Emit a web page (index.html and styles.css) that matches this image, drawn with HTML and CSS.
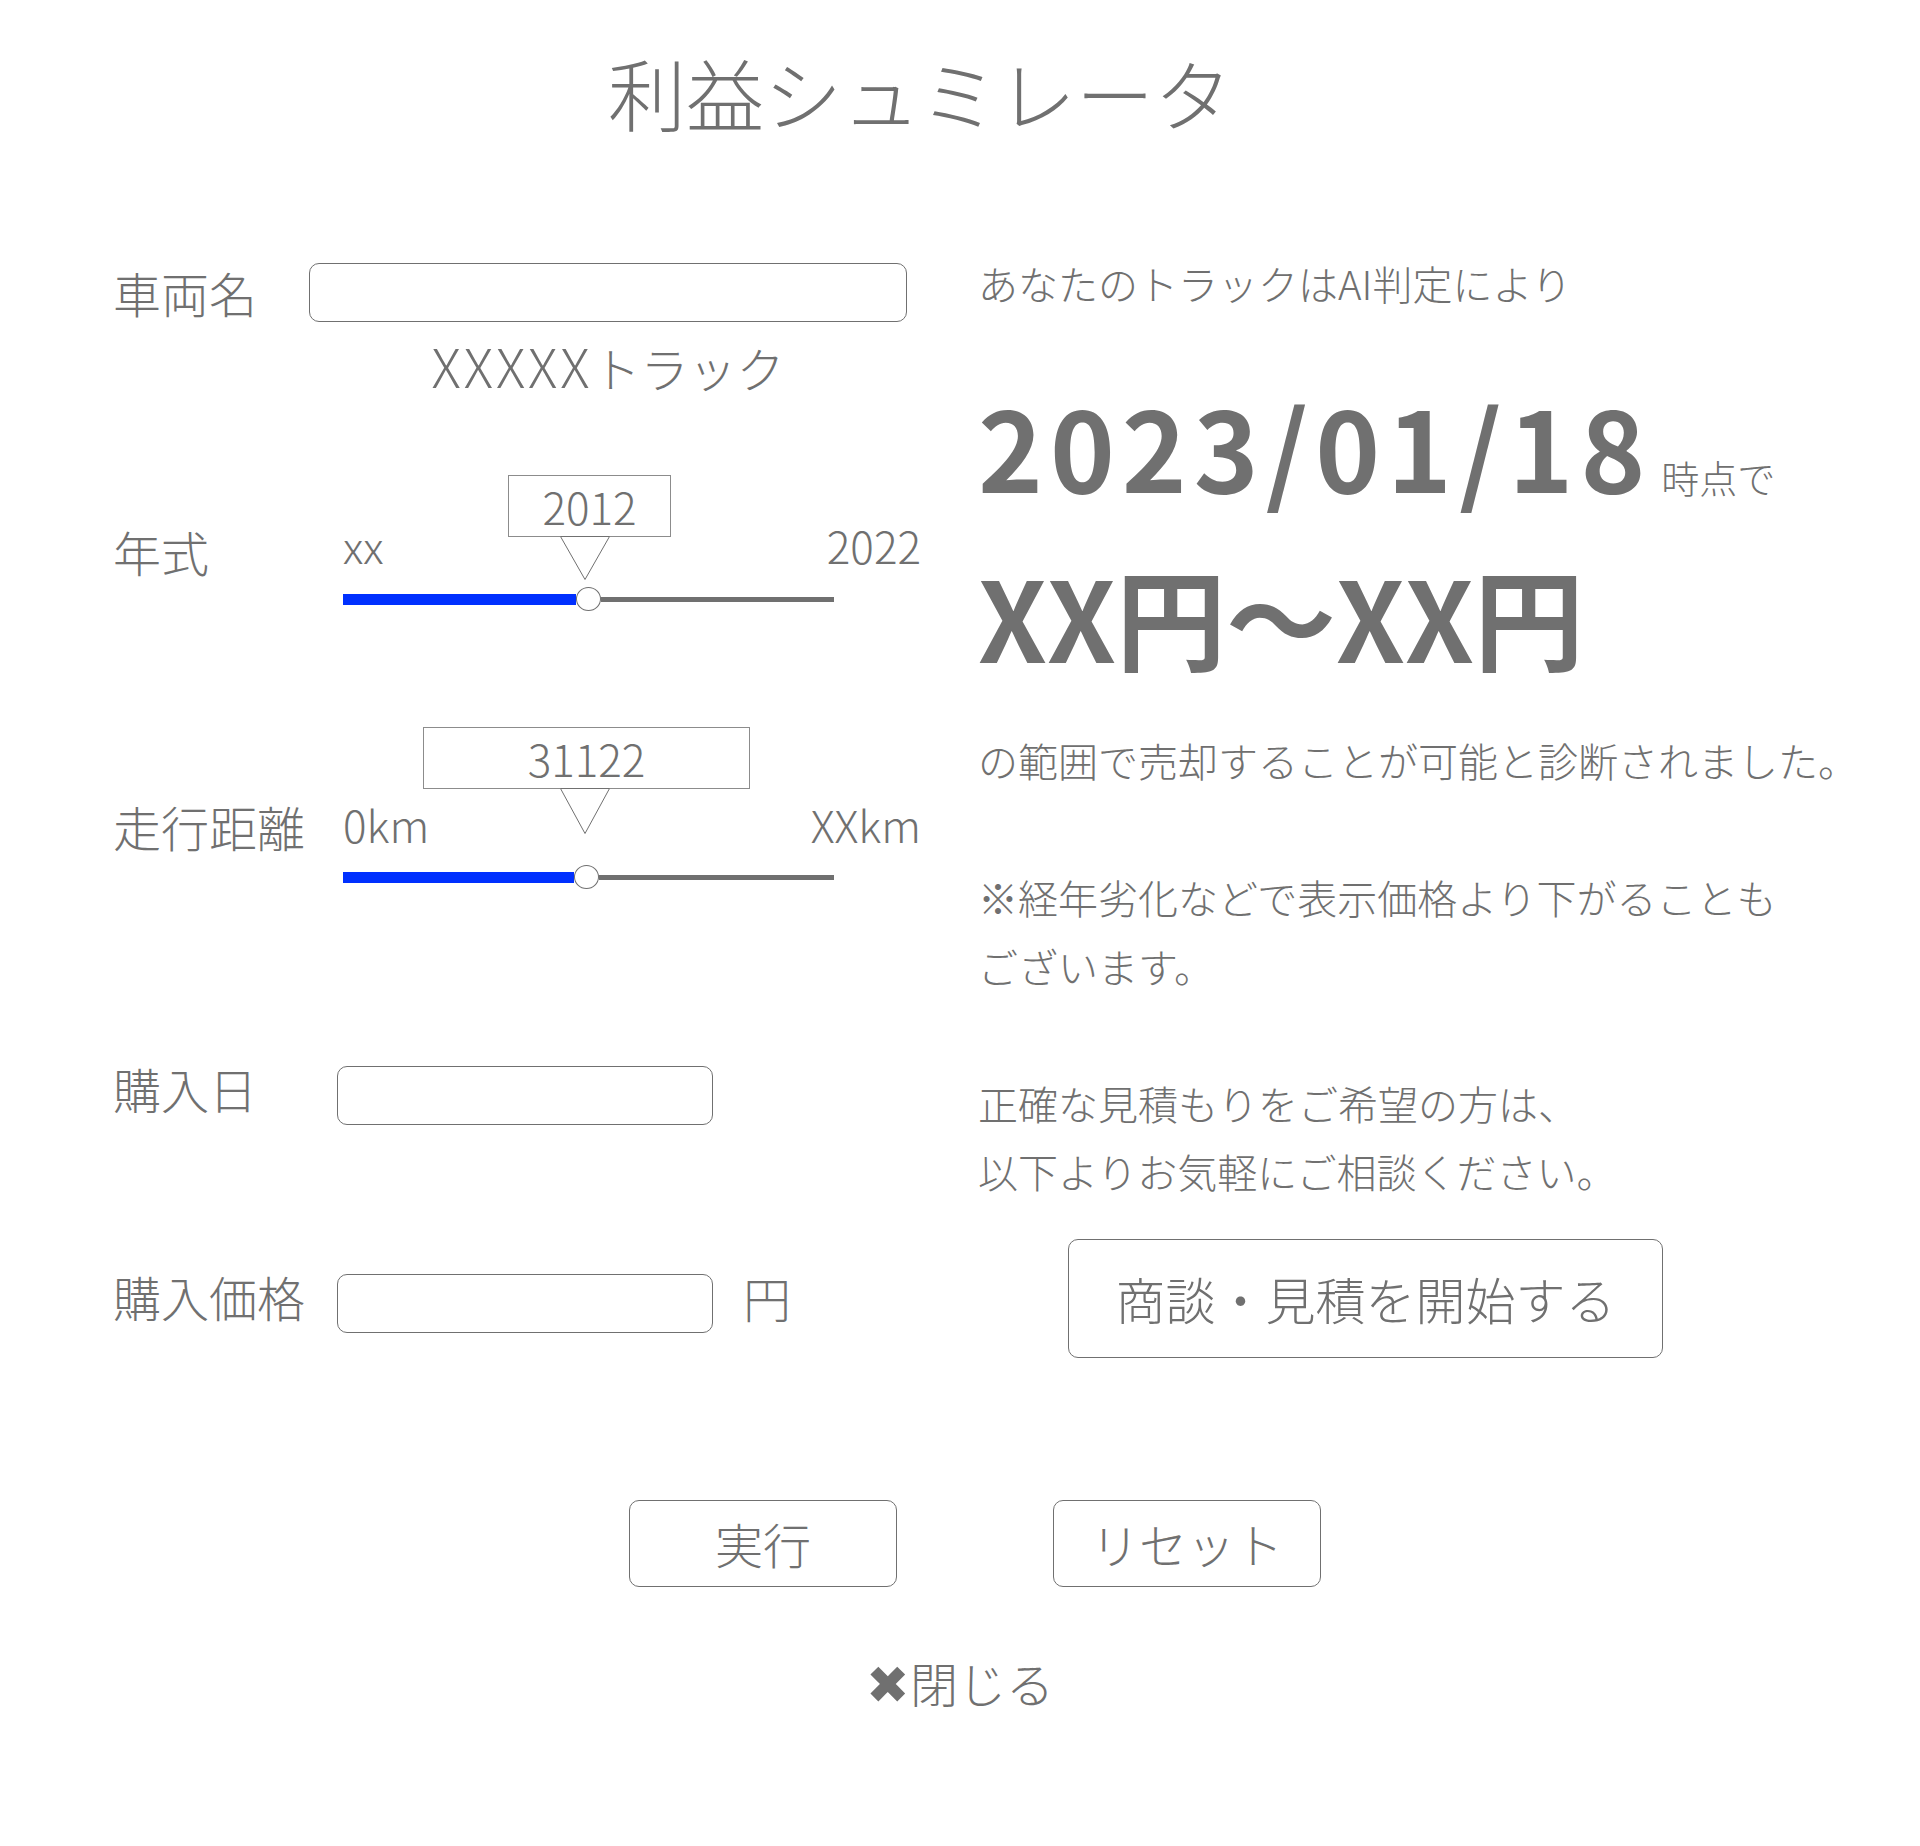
FILE: index.html
```html
<!DOCTYPE html>
<html lang="ja">
<head>
<meta charset="utf-8">
<title>利益シュミレータ</title>
<link rel="stylesheet" href="styles.css">
</head>
<body>
<div class="page">
  <h1 class="title">利益シュミレータ</h1>

  <div class="main">
    <div class="left">
      <div class="row row-name">
        <span class="label label-name">車両名</span>
        <input class="field field-name" type="text">
      </div>
      <div class="truck-name"><span class="wide">XXXXX</span>トラック</div>

      <div class="row row-year">
        <span class="label label-slider label-year">年式</span>
        <div class="slider">
          <div class="tip tip-year">2012
            <svg class="tip-arrow" width="50" height="44" viewBox="0 0 50 44"><polygon points="0.5,0.5 49.5,0.5 25,43.5" fill="#fff" stroke="#707070" stroke-width="1"/></svg>
          </div>
          <div class="ends"><span>xx</span><span>2022</span></div>
          <div class="track">
            <div class="fill" style="width:233px"></div>
            <div class="thumb"></div>
            <div class="rest"></div>
          </div>
        </div>
      </div>

      <div class="row row-mileage">
        <span class="label label-slider label-mileage">走行距離</span>
        <div class="slider">
          <div class="tip tip-mileage">31122
            <svg class="tip-arrow" width="50" height="46" viewBox="0 0 50 46"><polygon points="0.5,0.5 49.5,0.5 25,45.5" fill="#fff" stroke="#707070" stroke-width="1"/></svg>
          </div>
          <div class="ends"><span>0km</span><span>XXkm</span></div>
          <div class="track">
            <div class="fill" style="width:231px"></div>
            <div class="thumb"></div>
            <div class="rest"></div>
          </div>
        </div>
      </div>

      <div class="row row-date">
        <span class="label label-short">購入日</span>
        <input class="field field-short" type="text">
      </div>

      <div class="row row-price">
        <span class="label label-short">購入価格</span>
        <input class="field field-short" type="text">
        <span class="unit">円</span>
      </div>
    </div>

    <div class="right">
      <p class="lead">あなたのトラックはAI判定により</p>
      <p class="date">2023/01/18<span class="asof">時点で</span></p>
      <p class="range">XX円〜XX円</p>
      <p class="note">の範囲で売却することが可能と診断されました。<br><br>※経年劣化などで表示価格より下がることも<br>ございます。<br><br>正確な見積もりをご希望の方は、<br>以下よりお気軽にご相談ください。</p>
      <button class="consult" type="button">商談・見積を開始する</button>
    </div>
  </div>

  <div class="actions">
    <button class="btn" type="button">実行</button>
    <button class="btn" type="button">リセット</button>
  </div>

  <div class="close"><span class="close-x">✖</span>閉じる</div>
</div>
</body>
</html>
```

FILE: styles.css
```css
* { box-sizing: border-box; }

html, body {
  margin: 0;
  padding: 0;
  background: #ffffff;
}

body {
  width: 1920px;
  min-height: 1846px;
  font-family: "Noto Sans CJK JP", "Noto Sans", sans-serif;
  color: #707070;
  font-weight: 300;
}

.title {
  margin: 53px 0 0 0;
  padding-right: 80px;
  font-size: 78px;
  line-height: 78px;
  font-weight: 300;
  text-align: center;
}

.main {
  display: grid;
  grid-template-columns: 865px 1fr;
  padding-left: 113px;
  margin-top: 117px;
}

/* ---------- left column ---------- */
.row {
  display: flex;
  align-items: flex-start;
}

.label {
  font-size: 48px;
  line-height: 59px;
  white-space: nowrap;
}

.label-name { width: 196px; }
.label-slider { width: 230px; line-height: 60px; }
.label-short { width: 224px; margin-top: -7px; }

.field {
  height: 59px;
  border: 1px solid #707070;
  border-radius: 10px;
  background: #fff;
  font: inherit;
  padding: 0 12px;
  outline: none;
}

.field-name { width: 598px; }
.field-short { width: 376px; }

.row-name { margin-top: 15px; }

.truck-name {
  margin: 15px 0 0 196px;
  width: 598px;
  text-align: center;
  font-size: 48px;
  line-height: 60px;
  white-space: nowrap;
}

.wide {
  font-size: 54px;
  line-height: 1;
  letter-spacing: 3px;
}

.row-year { margin-top: 118px; }
.label-year { margin-top: 6px; }

.row-mileage { margin-top: 183px; }
.label-mileage { margin-top: 2px; }

.slider {
  position: relative;
  width: 578px;
}

.ends {
  display: flex;
  justify-content: space-between;
  font-size: 44px;
  line-height: 60px;
}

.track {
  display: flex;
  align-items: center;
  width: 491px;
  height: 24px;
  margin-top: 12px;
}

.row-mileage .track { margin-top: 11px; }

.fill {
  height: 11px;
  background: #0030ff;
  flex: none;
}

.thumb {
  width: 25px;
  height: 24px;
  border: 1px solid #707070;
  border-radius: 50%;
  background: #fff;
  flex: none;
}

.rest {
  flex: 1;
  height: 5px;
  background: #707070;
}

.tip {
  position: absolute;
  height: 62px;
  border: 1px solid #8c8c8c;
  background: #fff;
  font-size: 44px;
  line-height: 60px;
  text-align: center;
  z-index: 1;
}

.tip-year { left: 165px; top: -40px; width: 163px; }
.tip-mileage { left: 80px; top: -67px; width: 327px; }

.tip-arrow {
  position: absolute;
  top: 60px;
  display: block;
}

.tip-year .tip-arrow { left: 51px; }
.tip-mileage .tip-arrow { left: 136px; }

.row-date { margin-top: 177px; }
.row-price { margin-top: 149px; }

.unit {
  margin: -6px 0 0 30px;
  font-size: 48px;
  line-height: 59px;
}

/* ---------- right column ---------- */
.right p { margin: 0; white-space: nowrap; }

.lead {
  font-size: 40px;
  line-height: 70px;
}

.date {
  margin-top: 61px !important;
  font-size: 110px;
  line-height: 132px;
  font-weight: 700;
  letter-spacing: 7px;
}

.asof {
  margin-left: 9px;
  font-size: 38px;
  line-height: 1;
  font-weight: 300;
  letter-spacing: 0;
}

.range {
  margin-top: 38px !important;
  font-size: 110px;
  line-height: 132px;
  font-weight: 700;
}

.note {
  margin-top: 45px !important;
  font-size: 40px;
  line-height: 68.5px;
}

.consult {
  display: block;
  margin: 33px 0 0 90px;
  width: 595px;
  height: 119px;
  border: 1px solid #707070;
  border-radius: 10px;
  background: #fff;
  color: #707070;
  font-family: inherit;
  font-weight: 300;
  font-size: 50px;
  padding: 0;
}

/* ---------- bottom ---------- */
.actions {
  display: flex;
  justify-content: center;
  gap: 156px;
  padding-left: 30px;
  margin-top: 142px;
}

.btn {
  width: 268px;
  height: 87px;
  border: 1px solid #707070;
  border-radius: 10px;
  background: #fff;
  color: #707070;
  font-family: inherit;
  font-weight: 300;
  font-size: 48px;
  padding: 0;
}

.close {
  margin-top: 65px;
  text-align: center;
  font-size: 48px;
  line-height: 60px;
}

.close-x {
  font-family: "DejaVu Sans", sans-serif;
  font-size: 52px;
}
```
